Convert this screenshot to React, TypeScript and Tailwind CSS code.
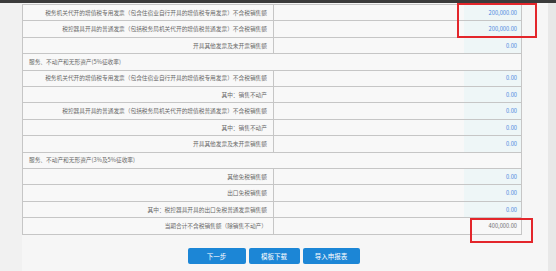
import React from 'react';

type Row =
  | { kind: 'item'; label: string; value: string; total?: boolean }
  | { kind: 'section'; label: string };

const rows: Row[] = [
  { kind: 'item', label: '税务机关代开的增值税专用发票（包含住宿业自行开具的增值税专用发票）不含税销售额', value: '200,000.00' },
  { kind: 'item', label: '税控器具开具的普通发票（包括税务局机关代开的增值税普通发票）不含税销售额', value: '200,000.00' },
  { kind: 'item', label: '开具其他发票及未开票销售额', value: '0.00' },
  { kind: 'section', label: '服务、不动产和无形资产(5%征收率)' },
  { kind: 'item', label: '税务机关代开的增值税专用发票（包含住宿业自行开具的增值税专用发票）不含税销售额', value: '0.00' },
  { kind: 'item', label: '其中：销售不动产', value: '0.00' },
  { kind: 'item', label: '税控器具开具的普通发票（包括税务局机关代开的增值税普通发票）不含税销售额', value: '0.00' },
  { kind: 'item', label: '其中：销售不动产', value: '0.00' },
  { kind: 'item', label: '开具其他发票及未开票销售额', value: '0.00' },
  { kind: 'section', label: '服务、不动产和无形资产(3%及5%征收率)' },
  { kind: 'item', label: '其他免税销售额', value: '0.00' },
  { kind: 'item', label: '出口免税销售额', value: '0.00' },
  { kind: 'item', label: '其中：税控器具开具的出口免税普通发票销售额', value: '0.00' },
  { kind: 'item', label: '当期合计不含税销售额（除销售不动产）', value: '400,000.00', total: true },
];

export default function App() {
  return (
    <div
      className="relative w-[556px] h-[271px] overflow-hidden bg-[#f2f2f2] flex flex-col"
      style={{ fontFamily: '"Noto Sans CJK SC", "Liberation Sans", sans-serif' }}
    >
      {/* 顶部深色条 */}
      <div className="h-[3px] bg-[#3b3b3b] shrink-0" />

      <div className="flex flex-1">
        <div className="w-[22px] bg-[#f1f1f1]" />
        <div className="w-[526px] pr-[26px] pt-[1px] bg-[#f6f6f6]">
          <div className="border border-[#c6c6c6] bg-[#f8f8f8]">
            {rows.map((r, i) =>
              r.kind === 'section' ? (
                <div
                  key={i}
                  className="h-[16.4px] flex items-center pl-[6px] text-[5.7px] leading-none text-[#6a6a6a] border-b border-[#c6c6c6]"
                >
                  {r.label}
                </div>
              ) : (
                <div
                  key={i}
                  className={
                    'h-[16.4px] flex text-[5.7px] leading-none ' +
                    (i === rows.length - 1 ? '' : 'border-b border-[#c6c6c6]')
                  }
                >
                  <div className="w-[251px] flex items-center justify-end pr-[6px] border-r border-[#c6c6c6] text-[#6a6a6a]">
                    {r.label}
                  </div>
                  <div className="flex-1 flex justify-end">
                    <div
                      className={
                        'w-[57px] flex items-center justify-end pr-[4px] ' +
                        (r.total ? 'text-[#707070]' : 'bg-[#eef6f7] text-[#4a86e0]')
                      }
                    >
                      {r.value}
                    </div>
                  </div>
                </div>
              )
            )}
          </div>

          <div className="mt-[13px] flex justify-center gap-[3px] pl-[3px]">
            <button className="w-[58px] h-[16px] rounded-[2px] bg-[#1c86d6] text-white text-[6.5px] leading-none">
              下一步
            </button>
            <button className="w-[51px] h-[16px] rounded-[2px] bg-[#1c86d6] text-white text-[6.5px] leading-none">
              模板下载
            </button>
            <button className="w-[57px] h-[16px] rounded-[2px] bg-[#1c86d6] text-white text-[6.5px] leading-none">
              导入申报表
            </button>
          </div>
        </div>
        {/* 滚动条 */}
        <div className="w-[8px] bg-[#e8e8e8]" />
      </div>

      {/* 红色标注框 */}
      <div className="absolute left-[457px] top-[3px] w-[80px] h-[35px] border-2 border-[#e3262b]" />
      <div className="absolute left-[470px] top-[218px] w-[63px] h-[25px] border-2 border-[#e3262b]" />
    </div>
  );
}
